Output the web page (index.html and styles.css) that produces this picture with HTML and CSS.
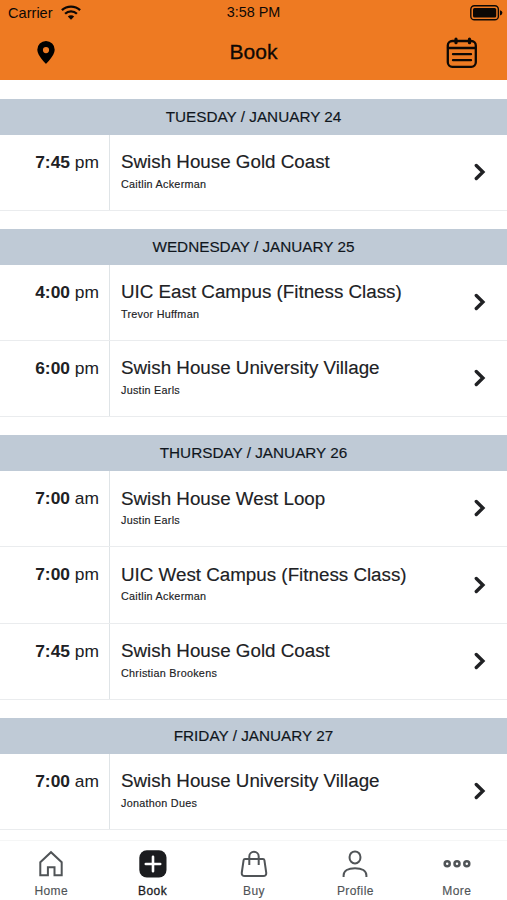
FILE: index.html
```html
<!DOCTYPE html>
<html lang="en">
<head>
<meta charset="utf-8">
<title>Book</title>
<link rel="stylesheet" href="styles.css">
</head>
<body>
<svg class="defs" width="0" height="0" aria-hidden="true">
  <symbol id="chevron" viewBox="0 0 12 18"><path d="M2.300 2.500 8.900 9l-6.600 6.500" fill="none" stroke="currentColor" stroke-width="3.400" stroke-linecap="round"/></symbol>
</svg>
<div class="app">
  <header class="top">
    <div class="status">
      <div class="carrier"><span>Carrier</span>
        <svg width="20" height="15" viewBox="0 0 20 15" fill="none" stroke="currentColor" stroke-width="2.300"><path d="M.9 5.200a13.200 13.200 0 0 1 18.200 0M4.100 8.800a8.400 8.400 0 0 1 11.800 0"/><path d="M6.800 11.600a4.600 4.600 0 0 1 6.400 0L10 14.800z" fill="currentColor" stroke="none"/></svg>
      </div>
      <span class="clock">3:58 PM</span>
      <svg class="battery" width="33" height="16" viewBox="0 0 33 16"><rect x=".8" y=".8" width="27.600" height="14" rx="3.600" fill="none" stroke="currentColor" stroke-width="1.400"/><rect x="3" y="3" width="23.200" height="9.600" rx="1.600" fill="currentColor"/><path d="M30 5.200q2.400.6 2.400 2.600T30 10.400z" fill="currentColor"/></svg>
    </div>
    <div class="nav">
      <svg class="pin" width="18" height="23" viewBox="0 0 18 23"><path d="M9 0a8.700 8.700 0 0 0-8.700 8.800C.3 14.500 9 23 9 23s8.700-8.500 8.700-14.200A8.700 8.700 0 0 0 9 0zm0 6a3.100 3.100 0 1 1 0 6.200A3.100 3.100 0 0 1 9 6z" fill="currentColor" fill-rule="evenodd"/></svg>
      <h1>Book</h1>
      <svg class="calendar" width="32" height="32" viewBox="0 0 32 32" fill="none" stroke="currentColor" stroke-width="2.300" stroke-linecap="round"><rect x="1.800" y="4" width="28" height="25.800" rx="4.500"/><path d="M2 11h27.500M7 17.200h18M7 23.200h18"/><path d="M10 2.200v3.500M23.500 2.200v3.500" stroke-width="3.200"/></svg>
    </div>
  </header>

  <main class="schedule">
    <section>
      <h2>TUESDAY / JANUARY 24</h2>
      <article><div class="time"><b>7:45</b> pm</div><div class="info"><h3>Swish House Gold Coast</h3><p>Caitlin Ackerman</p></div><svg class="chevron"><use href="#chevron"/></svg></article>
    </section>
    <section>
      <h2>WEDNESDAY / JANUARY 25</h2>
      <article><div class="time"><b>4:00</b> pm</div><div class="info"><h3>UIC East Campus (Fitness Class)</h3><p>Trevor Huffman</p></div><svg class="chevron"><use href="#chevron"/></svg></article>
      <article><div class="time"><b>6:00</b> pm</div><div class="info"><h3>Swish House University Village</h3><p>Justin Earls</p></div><svg class="chevron"><use href="#chevron"/></svg></article>
    </section>
    <section>
      <h2>THURSDAY / JANUARY 26</h2>
      <article><div class="time"><b>7:00</b> am</div><div class="info"><h3>Swish House West Loop</h3><p>Justin Earls</p></div><svg class="chevron"><use href="#chevron"/></svg></article>
      <article><div class="time"><b>7:00</b> pm</div><div class="info"><h3>UIC West Campus (Fitness Class)</h3><p>Caitlin Ackerman</p></div><svg class="chevron"><use href="#chevron"/></svg></article>
      <article><div class="time"><b>7:45</b> pm</div><div class="info"><h3>Swish House Gold Coast</h3><p>Christian Brookens</p></div><svg class="chevron"><use href="#chevron"/></svg></article>
    </section>
    <section>
      <h2>FRIDAY / JANUARY 27</h2>
      <article><div class="time"><b>7:00</b> am</div><div class="info"><h3>Swish House University Village</h3><p>Jonathon Dues</p></div><svg class="chevron"><use href="#chevron"/></svg></article>
    </section>
  </main>

  <nav class="tabs">
    <a><svg viewBox="0 0 28 28"><path d="M3.300 12.200 14 2.200l10.700 10v13.100h-7.200v-8h-6.600v8H3.300z"/></svg><span>Home</span></a>
    <a class="active"><svg viewBox="0 0 28 28"><rect x=".3" y=".2" width="27.200" height="27.200" rx="7.500" fill="currentColor" stroke="none"/><path d="M14 6.800v14.400M6.800 14h14.400" stroke="#fff" stroke-width="2.600" stroke-linecap="round"/></svg><span>Book</span></a>
    <a><svg viewBox="0 0 28 28"><path d="M5 9h18q1.200 0 1.400 1.200l1.800 12.300q.4 3.500-3 3.500H4.800q-3.400 0-3-3.500L3.600 10.200Q3.800 9 5 9zM9.300 15V6.500a4.700 4.700 0 0 1 9.400 0V15"/></svg><span>Buy</span></a>
    <a><svg viewBox="0 0 28 28"><rect x="8.600" y="1.400" width="10.800" height="12" rx="5.400"/><path d="M2.600 27v-1.500C2.600 21 7 18.200 14 18.200S25.400 21 25.400 25.500V27"/></svg><span>Profile</span></a>
    <a><svg viewBox="0 0 28 28"><g stroke-width="2.500"><circle cx="4.200" cy="13.700" r="2.500"/><circle cx="14" cy="13.700" r="2.500"/><circle cx="23.800" cy="13.700" r="2.500"/></g></svg><span>More</span></a>
  </nav>
</div>
</body>
</html>
```
FILE: styles.css
```css
* { box-sizing: border-box; }
body, h1, h2, h3, p { margin: 0; font-weight: 400; }
body {
  background: #fff;
  color: #202124;
  font-family: "Liberation Sans", Arial, sans-serif;
}
.defs { display: block; }
.app {
  height: 900px;
  display: flex;
  flex-direction: column;
  overflow: hidden;
}
.top {
  flex: none;
  height: 80px;
  background: #ee7a22;
  color: #0d0805;
}
.status {
  height: 25px;
  display: grid;
  grid-template-columns: 1fr auto 1fr;
  align-items: center;
  padding: 0 4px 0 8px;
  font-size: 14.600px;
}
.clock { margin: -2px 4px 0 0; font-size: 14.400px; }
.carrier { display: flex; align-items: center; gap: 8px; }
.battery { justify-self: end; }
.nav {
  height: 55px;
  display: grid;
  grid-template-columns: 1fr auto 1fr;
  align-items: center;
  padding: 0 29px 0 37px;
}
.nav h1 { font-size: 21px; line-height: 54px; margin: -2px 0 0 -8px; -webkit-text-stroke: .3px; }
.pin { color: #000; margin-top: -1px; }
.calendar { justify-self: end; }
.schedule { flex: 1; min-height: 0; padding-top: 18.500px; overflow: hidden; }
section { margin-bottom: 18.300px; }
h2 {
  height: 36px;
  line-height: 35px;
  text-align: center;
  font-size: 15.300px;
  background: #bfcad6;
  color: #10161d;
  -webkit-text-stroke: .15px;
}
article {
  height: 76.100px;
  display: grid;
  grid-template-columns: 110px 1fr 12px;
  border-bottom: 1px solid #eaecee;
  padding-right: 21px;
}
.time {
  border-right: 1px solid #dfe4e7;
  padding: 16px 10px 0 0;
  text-align: right;
  font-size: 17.400px;
  line-height: 22px;
}
.info { padding: 15.500px 0 0 11px; }
h3 { font-size: 18.800px; line-height: 24px; white-space: nowrap; -webkit-text-stroke: .15px; }
.info p { font-size: 10.800px; line-height: 14px; letter-spacing: .27px; margin-top: 2.500px; -webkit-text-stroke: .15px; }
.chevron { width: 12px; height: 18px; align-self: center; margin-top: -1px; }
.tabs {
  flex: none;
  height: 60px;
  display: grid;
  grid-template-columns: repeat(5, 1fr);
  border-top: 1px solid #f5f6f6;
  background: #fff;
}
.tabs a {
  display: flex;
  flex-direction: column;
  align-items: center;
  padding-top: 9px;
  color: #505457;
}
.tabs svg {
  width: 28px;
  height: 28px;
  margin-left: 1px;
  fill: none;
  stroke: currentColor;
  stroke-width: 2;
}
.tabs span { margin: 6px 0 0 1px; font-size: 12px; line-height: 14px; letter-spacing: .4px; -webkit-text-stroke: .15px; }
.tabs .active { color: #1b1c1f; }
.active span { -webkit-text-stroke: .3px; }
```
